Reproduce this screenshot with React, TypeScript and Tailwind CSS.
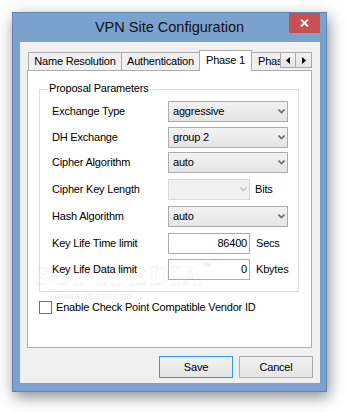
import React from "react";

const font = { fontFamily: '"Liberation Sans", Arial, sans-serif' };

function Arrow({ disabled }: { disabled?: boolean }) {
  return (
    <svg width="7" height="5" viewBox="0 0 7 5" className="shrink-0">
      <path d="M0.5 0.5 L3.5 3.5 L6.5 0.5" fill="none" stroke={disabled ? "#c8c8c8" : "#707070"} strokeWidth="1.6" />
    </svg>
  );
}

function Select({ value, width, disabled }: { value: string; width: string; disabled?: boolean }) {
  return (
    <div
      className={`${width} h-[21px] flex items-center justify-between pl-[4px] pr-[2px] border ${
        disabled ? "border-[#d9d9d9] bg-[#f0f0f0]" : "border-[#acacac] bg-gradient-to-b from-[#f2f2f2] to-[#e5e5e5]"
      }`}
    >
      <span className="leading-none">{value}</span>
      <Arrow disabled={disabled} />
    </div>
  );
}

function Row({ label, mt, children }: { label: string; mt: string; children: React.ReactNode }) {
  return (
    <div className={`flex items-center h-[21px] ${mt} ml-[12px]`}>
      <div className="w-[116px] leading-none">{label}</div>
      {children}
    </div>
  );
}

function NumInput({ value, unit }: { value: string; unit: string }) {
  return (
    <>
      <div className="w-[82px] h-[21px] border border-[#acacac] bg-white flex items-center justify-end pr-[2px] leading-none">
        {value}
      </div>
      <span className="ml-[6px] leading-none">{unit}</span>
    </>
  );
}

export default function App() {
  return (
    <div className="w-[347px] h-[412px] bg-white pt-[12px] pl-[12px] relative overflow-hidden text-[11px] tracking-[-0.2px] text-black" style={font}>
      <div className="w-[315px] h-[380px] bg-[#7ba2cc] border border-[#5f86b3] shadow-[2px_5px_14px_rgba(0,0,0,0.45)] flex flex-col">
        {/* title bar */}
        <div className="h-[29px] relative flex items-center justify-center shrink-0">
          <span className="text-[14.5px] tracking-normal text-[#111] leading-none">VPN Site Configuration</span>
          <div className="absolute top-0 right-[6px] w-[31px] h-[20px] bg-[#c75050] flex items-center justify-center">
            <svg width="9" height="8" viewBox="0 0 9 8">
              <path d="M1 0.5 L8 7.5 M8 0.5 L1 7.5" stroke="white" strokeWidth="1.8" />
            </svg>
          </div>
        </div>
        {/* client */}
        <div className="ml-[7px] w-[300px] h-[341px] bg-[#f0f0f0] flex flex-col pt-[8px]">
          {/* tabs */}
          <div className="ml-[7px] h-[20px] flex items-end relative z-10">
            <div className="ml-[1px] w-[94px] h-[18px] border border-b-0 border-[#acacac] bg-[#f0f0f0] flex items-center justify-center leading-none">
              Name Resolution
            </div>
            <div className="w-[77px] h-[18px] border-t border-[#acacac] bg-[#f0f0f0] flex items-center justify-center leading-none">
              Authentication
            </div>
            <div className="w-[53px] h-[21px] -mb-[1px] border border-b-0 border-[#acacac] bg-white flex items-center justify-center leading-none pb-[2px]">
              Phase 1
            </div>
            <div className="w-[28px] h-[18px] border-t border-[#acacac] bg-[#f0f0f0] flex items-center pl-[6px] overflow-hidden whitespace-nowrap leading-none">
              Phase 2
            </div>
            <div className="flex h-[16px] self-start mt-[2px]">
              <div className="w-[16px] h-[16px] border border-[#acacac] bg-gradient-to-b from-[#f2f2f2] to-[#e5e5e5] flex items-center justify-center">
                <svg width="4" height="7" viewBox="0 0 4 7"><path d="M4 0 L0 3.5 L4 7 Z" fill="#000" /></svg>
              </div>
              <div className="w-[16px] h-[16px] border border-l-0 border-[#acacac] bg-gradient-to-b from-[#f2f2f2] to-[#e5e5e5] flex items-center justify-center">
                <svg width="4" height="7" viewBox="0 0 4 7"><path d="M0 0 L4 3.5 L0 7 Z" fill="#000" /></svg>
              </div>
            </div>
          </div>
          {/* panel */}
          <div className="ml-[7px] w-[285px] h-[278px] border border-[#acacac] bg-white flex flex-col">
            <div className="ml-[11px] mt-[18px] w-[260px] h-[203px] border border-[#dcdcdc] relative">
              <span className="absolute -top-[7px] left-[8px] bg-white px-[1px] leading-none">Proposal Parameters</span>
              <Row label="Exchange Type" mt="mt-[11px]">
                <Select value="aggressive" width="w-[120px]" />
              </Row>
              <Row label="DH Exchange" mt="mt-[5px]">
                <Select value="group 2" width="w-[120px]" />
              </Row>
              <Row label="Cipher Algorithm" mt="mt-[4px]">
                <Select value="auto" width="w-[120px]" />
              </Row>
              <Row label="Cipher Key Length" mt="mt-[6px]">
                <Select value="" width="w-[82px]" disabled />
                <span className="ml-[5px] leading-none">Bits</span>
              </Row>
              <Row label="Hash Algorithm" mt="mt-[6px]">
                <Select value="auto" width="w-[120px]" />
              </Row>
              <Row label="Key Life Time limit" mt="mt-[6px]">
                <NumInput value="86400" unit="Secs" />
              </Row>
              <Row label="Key Life Data limit" mt="mt-[5px]">
                <NumInput value="0" unit="Kbytes" />
              </Row>
            </div>
            <div className="ml-[11px] mt-[9px] flex items-center">
              <div className="w-[13px] h-[13px] border border-[#707070] bg-white" />
              <span className="ml-[4px] leading-none">Enable Check Point Compatible Vendor ID</span>
            </div>
          </div>
          {/* buttons */}
          <div className="mt-[8px] flex justify-end pr-[7px] gap-[6px]">
            <div className="w-[74px] h-[22px] border border-[#3399ff] bg-gradient-to-b from-[#f2f2f2] to-[#e5e5e5] flex items-center justify-center leading-none">
              Save
            </div>
            <div className="w-[74px] h-[22px] border border-[#acacac] bg-gradient-to-b from-[#f2f2f2] to-[#e5e5e5] flex items-center justify-center leading-none">
              Cancel
            </div>
          </div>
        </div>
      </div>
      {/* watermark */}
      <div className="absolute left-[34px] top-[262px] text-[28px] font-bold tracking-[1px] text-transparent leading-none pointer-events-none" style={{ fontFamily: '"Liberation Serif", serif', WebkitTextStroke: "1px rgba(0,0,0,0.06)" }}>
        SOFTPEDIA<span className="text-[8px] align-top">™</span>
      </div>
      <div className="absolute left-[54px] top-[292px] text-[9px] tracking-normal text-[rgba(0,0,0,0.1)] leading-none pointer-events-none">
        www.softpedia.com
      </div>
    </div>
  );
}
